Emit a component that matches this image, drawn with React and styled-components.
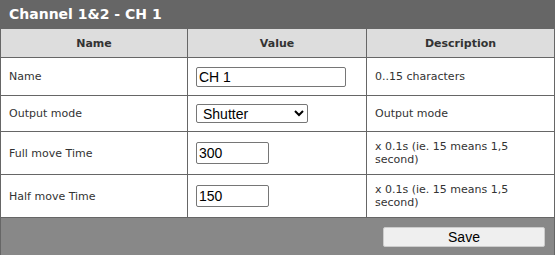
import React from "react";
import styled, { createGlobalStyle } from "styled-components";

const Global = createGlobalStyle`
  html, body { margin: 0; padding: 0; background: #fff; }
  * { box-sizing: border-box; }
`;

const Panel = styled.div`
  width: 555px;
  font-family: "DejaVu Sans", Verdana, sans-serif;
  font-size: 11px;
  color: #333;
`;

const TitleBar = styled.div`
  height: 28px;
  background: #666;
  color: #fff;
  font-weight: bold;
  font-size: 14px;
  display: flex;
  align-items: center;
  padding-left: 9px;
`;

const Table = styled.table`
  width: 555px;
  border-collapse: collapse;
  table-layout: fixed;
`;

const HeadCell = styled.th`
  background: #ddd;
  border: 1px solid #666;
  height: 29px;
  padding: 0 8px;
  font-weight: bold;
  text-align: center;
  color: #333;
`;

const Cell = styled.td`
  border: 1px solid #666;
  height: ${(p) => p.$h}px;
  padding: 0 8px;
  vertical-align: middle;
  line-height: 13px;
`;

const TextInput = styled.input`
  display: block;
  width: ${(p) => p.$w}px;
  height: ${(p) => p.$hgt}px;
  border: 1px solid #767676;
  border-radius: 2px;
  padding: 1px 2px;
  font-family: "Liberation Sans", Arial, sans-serif;
  font-size: 14px;
  color: #000;
  background: #fff;
  outline: none;
`;

const Select = styled.select`
  display: block;
  width: 112px;
  height: 19px;
  border: 1px solid #767676;
  border-radius: 2px;
  font-family: "Liberation Sans", Arial, sans-serif;
  font-size: 14px;
  color: #000;
  background: #fff;
  padding: 0 0 0 2px;
`;

const Footer = styled.div`
  background: #888;
  border-left: 1px solid #666;
  border-right: 1px solid #666;
  height: 37px;
  display: flex;
  justify-content: flex-end;
  align-items: flex-start;
  padding: 9px 9px 0 0;
`;

const Button = styled.button`
  width: 162px;
  height: 20px;
  background: #efefef;
  border: 1px solid #ccc;
  border-radius: 2px;
  font-family: "Liberation Sans", Arial, sans-serif;
  font-size: 14px;
  color: #000;
  padding: 0;
`;

const rows = [
  { name: "Name", h: 38, kind: "text", value: "CH 1", desc: "0..15 characters" },
  { name: "Output mode", h: 36, kind: "select", value: "Shutter", desc: "Output mode" },
  { name: "Full move Time", h: 43, kind: "num", value: "300", desc: "x 0.1s (ie. 15 means 1,5 second)" },
  { name: "Half move Time", h: 43, kind: "num", value: "150", desc: "x 0.1s (ie. 15 means 1,5 second)" },
];

export default function App() {
  return (
    <>
      <Global />
      <Panel>
        <TitleBar>Channel 1&amp;2 - CH 1</TitleBar>
        <Table>
          <colgroup>
            <col style={{ width: 187 }} />
            <col style={{ width: 179 }} />
            <col />
          </colgroup>
          <thead>
            <tr>
              <HeadCell>Name</HeadCell>
              <HeadCell>Value</HeadCell>
              <HeadCell>Description</HeadCell>
            </tr>
          </thead>
          <tbody>
            {rows.map((r) => (
              <tr key={r.name}>
                <Cell $h={r.h}>{r.name}</Cell>
                <Cell $h={r.h}>
                  {r.kind === "text" && <TextInput $w={150} $hgt={20} defaultValue={r.value} />}
                  {r.kind === "select" && (
                    <Select defaultValue={r.value}>
                      <option>Shutter</option>
                      <option>Relay</option>
                    </Select>
                  )}
                  {r.kind === "num" && <TextInput $w={73} $hgt={22} defaultValue={r.value} />}
                </Cell>
                <Cell $h={r.h}>{r.desc}</Cell>
              </tr>
            ))}
          </tbody>
        </Table>
        <Footer>
          <Button>Save</Button>
        </Footer>
      </Panel>
    </>
  );
}
